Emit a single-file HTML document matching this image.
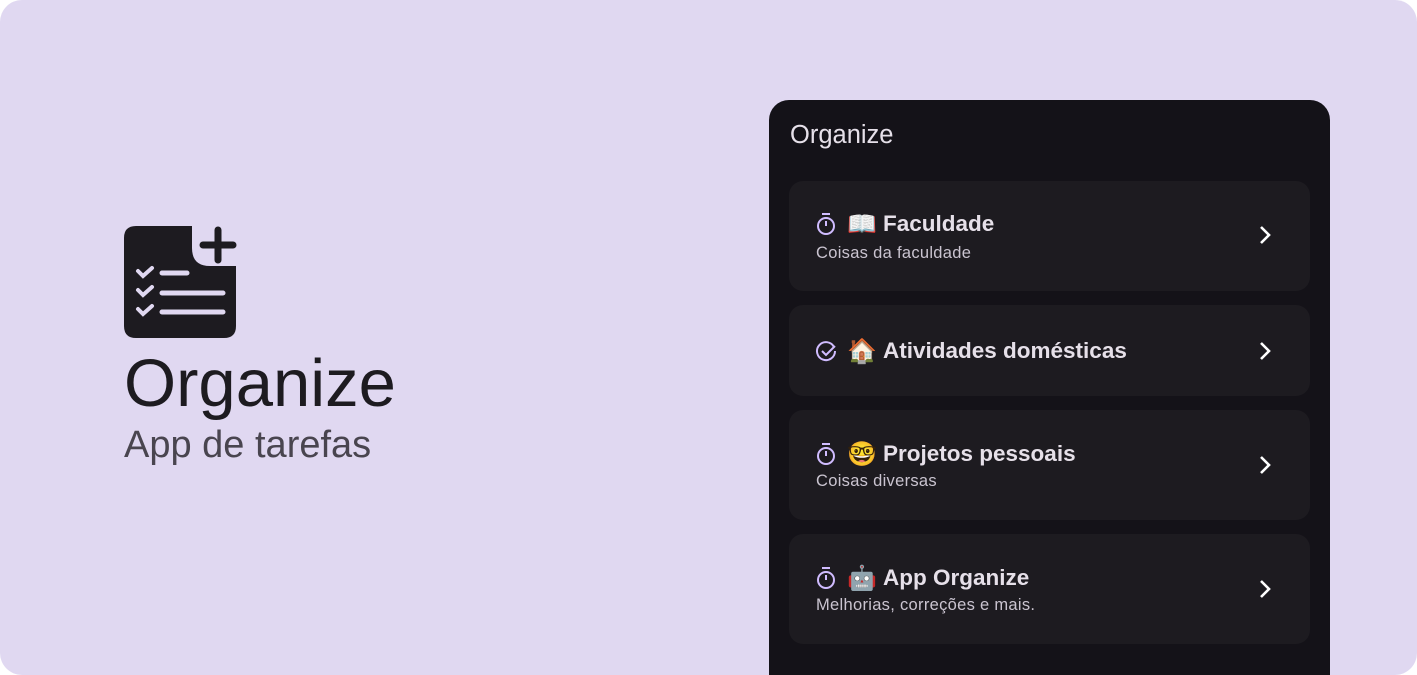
<!DOCTYPE html>
<html><head><meta charset="utf-8"><style>
*{margin:0;padding:0;box-sizing:border-box}
html,body{width:1417px;height:675px;background:#fff;overflow:hidden}
.page{position:absolute;left:0;top:0;width:1417px;height:675px;background:#e0d8f1;border-radius:22px;overflow:hidden;font-family:"Liberation Sans","DejaVu Sans",sans-serif}
.title{position:absolute;left:124px;top:345px;font-size:67px;color:#1d1b20;line-height:78px}
.sub{position:absolute;left:124px;top:423px;font-size:38px;color:#49454f;line-height:44px}
.panel{position:absolute;left:769px;top:100px;width:561px;height:600px;background:#141218;border-radius:20px}
.ph{position:absolute;left:21px;top:21px;font-size:25.5px;color:#e6e0e9}
.card{position:absolute;left:20px;width:521px;background:#1d1b20;border-radius:14px}
.ct{position:absolute;left:26px;font-size:22.5px;font-weight:bold;color:#e6e0e9;display:flex;align-items:center;white-space:nowrap}
.ct svg{margin-right:10px}
.em{font-family:"Noto Color Emoji","DejaVu Sans",sans-serif;font-size:24px;margin-right:8px;font-weight:normal;display:inline-block;width:28px}
.cs{position:absolute;left:27px;font-size:16.5px;color:#cac4d0;letter-spacing:.3px}
.chev{position:absolute;left:466px}
</style></head><body><div class="page">
<svg style="position:absolute;left:124px;top:226px" width="113" height="112" viewBox="0 0 113 112">
<path d="M12 0H68V22Q68 40 86 40H112V100Q112 112 100 112H12Q0 112 0 100V12Q0 0 12 0Z" fill="#1d1b20"/>
<path d="M94 4V34M79 19H109" stroke="#1d1b20" stroke-width="7" stroke-linecap="round"/>
<g stroke="#e0d8f1" stroke-width="5" stroke-linecap="round" fill="none">
<path d="M14 45l5 5 9-8M14 64l5 5 9-8M14 83l5 5 9-8" stroke-width="4"/>
<path d="M38 47H63M38 67H99M38 86H99"/></g></svg>
<div class="title">Organize</div>
<div class="sub">App de tarefas</div>
<div class="panel">
<div class="ph">Organize</div>
<div class="card" style="top:81px;height:110px">
<div class="ct" style="top:29px"><svg width="22" height="24" viewBox="0 0 22 24" fill="none" stroke="#d0bcff" stroke-width="2"><path d="M7 2h8"/><circle cx="11" cy="14" r="8"/><path d="M11 14V9"/></svg><span class="em">📖</span>Faculdade</div>
<div class="cs" style="top:63px">Coisas da faculdade</div>
<svg class="chev" style="top:44px" width="20" height="20" viewBox="0 0 20 20"><path d="M6 2l8 8-8 8" stroke="#fff" stroke-width="2.6" fill="none"/></svg></div>
<div class="card" style="top:205px;height:91px">
<div class="ct" style="top:32px"><svg width="22" height="22" viewBox="0 0 22 22" fill="none" stroke="#d0bcff" stroke-width="2"><path d="M19 7A9 9 0 1 0 20 11"/><path d="M7 11l4 4 9-9"/></svg><span class="em">🏠</span>Atividades domésticas</div>
<svg class="chev" style="top:36px" width="20" height="20" viewBox="0 0 20 20"><path d="M6 2l8 8-8 8" stroke="#fff" stroke-width="2.6" fill="none"/></svg></div>
<div class="card" style="top:310px;height:110px">
<div class="ct" style="top:30px"><svg width="22" height="24" viewBox="0 0 22 24" fill="none" stroke="#d0bcff" stroke-width="2"><path d="M7 2h8"/><circle cx="11" cy="14" r="8"/><path d="M11 14V9"/></svg><span class="em">🤓</span>Projetos pessoais</div>
<div class="cs" style="top:62px">Coisas diversas</div>
<svg class="chev" style="top:45px" width="20" height="20" viewBox="0 0 20 20"><path d="M6 2l8 8-8 8" stroke="#fff" stroke-width="2.6" fill="none"/></svg></div>
<div class="card" style="top:434px;height:110px">
<div class="ct" style="top:30px"><svg width="22" height="24" viewBox="0 0 22 24" fill="none" stroke="#d0bcff" stroke-width="2"><path d="M7 2h8"/><circle cx="11" cy="14" r="8"/><path d="M11 14V9"/></svg><span class="em">🤖</span>App Organize</div>
<div class="cs" style="top:62px">Melhorias, correções e mais.</div>
<svg class="chev" style="top:45px" width="20" height="20" viewBox="0 0 20 20"><path d="M6 2l8 8-8 8" stroke="#fff" stroke-width="2.6" fill="none"/></svg></div>
</div></div></body></html>
